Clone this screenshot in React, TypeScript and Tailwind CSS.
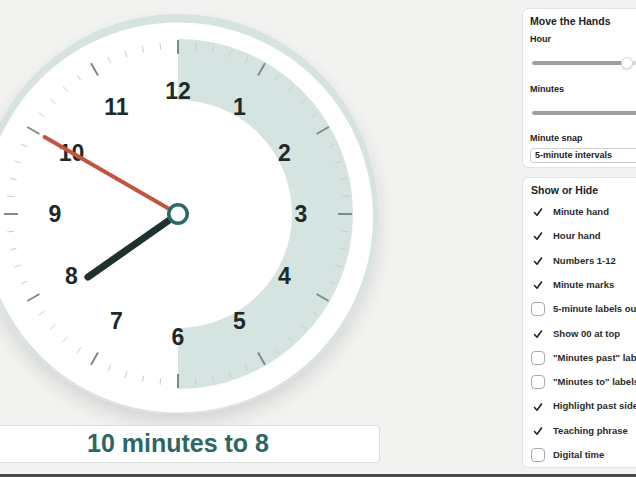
import React from "react";

const CX = 200;
const CY = 200;

function polar(r: number, deg: number) {
  const a = (deg * Math.PI) / 180;
  return { x: CX + r * Math.sin(a), y: CY - r * Math.cos(a) };
}

function Clock() {
  const ticks = [];
  for (let i = 0; i < 60; i++) {
    const major = i % 5 === 0;
    const a = i * 6;
    const p1 = polar(major ? 160 : 165, a);
    const p2 = polar(major ? 174 : 172, a);
    ticks.push(
      <line
        key={i}
        x1={p1.x}
        y1={p1.y}
        x2={p2.x}
        y2={p2.y}
        stroke={major ? "#7c8b89" : "#c6cfcd"}
        strokeWidth={major ? 2 : 1}
      />
    );
  }
  const nums = [];
  for (let n = 1; n <= 12; n++) {
    const p = polar(123, n * 30);
    nums.push(
      <text
        key={n}
        x={p.x}
        y={p.y}
        textAnchor="middle"
        dominantBaseline="central"
        fontFamily="'Liberation Sans', Arial, sans-serif"
        fontWeight="bold"
        fontSize="23"
        fill="#1d2a29"
      >
        {n}
      </text>
    );
  }
  const minEnd = polar(154, 300);
  const hourEnd = polar(110, 235);
  return (
    <svg width={400} height={400} viewBox="0 0 400 400" className="ml-[-22px] mt-[14px] overflow-visible shrink-0">
      <defs>
        <filter id="sh" x="-20%" y="-20%" width="140%" height="150%">
          <feDropShadow dx="0" dy="10" stdDeviation="10" floodColor="#000" floodOpacity="0.13" />
        </filter>
        <clipPath id="face">
          <circle cx={CX} cy={CY} r={200} />
        </clipPath>
      </defs>
      <circle cx={CX} cy={CY} r={200} fill="#d7e3e1" filter="url(#sh)" />
      <circle cx={CX} cy={CY + 3.5} r={195} fill="#ffffff" clipPath="url(#face)" />
      <path
        d={`M ${CX} ${CY - 175} A 175 175 0 0 1 ${CX} ${CY + 175} L ${CX} ${CY + 114} A 114 114 0 0 0 ${CX} ${CY - 114} Z`}
        fill="#d5e3e1"
      />
      {ticks}
      {nums}
      <line x1={CX} y1={CY} x2={minEnd.x} y2={minEnd.y} stroke="#c0563f" strokeWidth={4} strokeLinecap="round" />
      <line x1={CX} y1={CY} x2={hourEnd.x} y2={hourEnd.y} stroke="#1d312f" strokeWidth={7} strokeLinecap="round" />
      <circle cx={CX} cy={CY} r={9.25} fill="#ffffff" stroke="#2c6a69" strokeWidth={3.5} />
    </svg>
  );
}

function Check({ checked }: { checked: boolean }) {
  return checked ? (
    <svg width="14" height="14" viewBox="0 0 14 14" className="shrink-0">
      <path d="M3.5 7.5 L6 10.2 L10.5 4" fill="none" stroke="#222" strokeWidth="1.6" strokeLinecap="round" strokeLinejoin="round" />
    </svg>
  ) : (
    <div className="w-[14px] h-[14px] shrink-0 rounded-[4px] border border-[#a9a9a9] bg-white" />
  );
}

const items: [string, boolean][] = [
  ["Minute hand", true],
  ["Hour hand", true],
  ["Numbers 1-12", true],
  ["Minute marks", true],
  ["5-minute labels outside", false],
  ["Show 00 at top", true],
  ['"Minutes past" labels', false],
  ['"Minutes to" labels', false],
  ["Highlight past side", true],
  ["Teaching phrase", true],
  ["Digital time", false],
];

export default function App() {
  return (
    <div className="w-[636px] h-[477px] overflow-hidden bg-[#f3f4f1] flex flex-col font-['Liberation_Sans',Arial,sans-serif]">
      <div className="flex h-[474px] shrink-0">
        <div className="w-[522px] shrink-0 flex flex-col items-start">
          <Clock />
          <div className="ml-[-24px] mt-[11px] w-[404px] h-[38px] shrink-0 bg-white border border-[#dadedc] rounded-[4px] flex items-center justify-center text-[25px] font-bold text-[#2d6765]">
            10 minutes to 8
          </div>
        </div>
        <div className="w-[180px] shrink-0 pt-[8px] flex flex-col gap-[9px]">
          <div className="bg-white border border-[#e0e3e0] rounded-[6px] pl-[7px] pt-[5px] pb-[4px] flex flex-col">
            <div className="text-[10.5px] leading-[14px] font-bold text-[#222]">Move the Hands</div>
            <div className="mt-[5px] text-[9px] leading-[12px] font-bold text-[#222]">Hour</div>
            <div className="mt-[10px] h-[16px] relative flex items-center">
              <div className="ml-[2px] w-[89px] h-[4px] rounded-l-full bg-[#9f9f9f]" />
              <div className="w-[60px] h-[4px] bg-[#dcdcdc]" />
              <div className="absolute left-[91px] top-[2px] w-[12px] h-[12px] rounded-full bg-white border border-[#d8d8d8] shadow-[0_1px_2px_rgba(0,0,0,0.15)]" />
            </div>
            <div className="mt-[12px] text-[9px] leading-[12px] font-bold text-[#222]">Minutes</div>
            <div className="mt-[10px] h-[16px] flex items-center">
              <div className="ml-[2px] w-[160px] h-[4px] rounded-l-full bg-[#9f9f9f]" />
            </div>
            <div className="mt-[11px] text-[9px] leading-[12px] font-bold text-[#222]">Minute snap</div>
            <div className="mt-[4px] h-[15px] border border-[#cfcfcf] rounded-[3px] pl-[4px] flex items-center text-[9px] font-bold text-[#222]">
              5-minute intervals
            </div>
          </div>
          <div className="bg-white border border-[#e0e3e0] rounded-[6px] pl-[8px] pt-[5px] flex flex-col">
            <div className="text-[10.5px] leading-[14px] font-bold text-[#222]">Show or Hide</div>
            <div className="mt-[3px] flex flex-col">
              {items.map(([label, on]) => (
                <div key={label} className="h-[24.3px] flex items-center gap-[8px] whitespace-nowrap">
                  <Check checked={on} />
                  <span className="text-[9.5px] font-bold text-[#2b2b2b]">{label}</span>
                </div>
              ))}
            </div>
          </div>
        </div>
      </div>
      <div className="h-[3px] bg-[#4b4b4b] shrink-0" />
    </div>
  );
}
